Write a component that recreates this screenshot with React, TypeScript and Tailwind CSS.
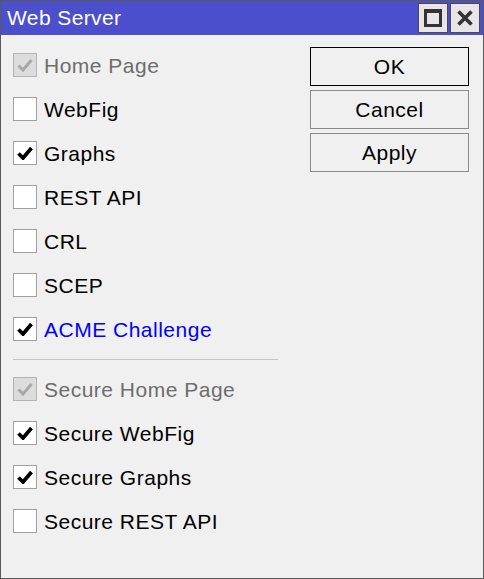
import React from 'react';

type Item = { label: string; checked: boolean; disabled?: boolean; link?: boolean };

const GROUP_A: Item[] = [
  { label: 'Home Page', checked: true, disabled: true },
  { label: 'WebFig', checked: false },
  { label: 'Graphs', checked: true },
  { label: 'REST API', checked: false },
  { label: 'CRL', checked: false },
  { label: 'SCEP', checked: false },
  { label: 'ACME Challenge', checked: true, link: true },
];

const GROUP_B: Item[] = [
  { label: 'Secure Home Page', checked: true, disabled: true },
  { label: 'Secure WebFig', checked: true },
  { label: 'Secure Graphs', checked: true },
  { label: 'Secure REST API', checked: false },
];

function CheckRow({ item }: { item: Item }) {
  return (
    <div className="flex h-[44px] items-center">
      <div
        className={`flex h-[24px] w-[24px] items-center justify-center border ${
          item.disabled ? 'border-[#b4b4b4] bg-[#dcdcdc]' : 'border-[#a0a0a0] bg-white'
        }`}
      >
        {item.checked && (
          <svg width="16" height="14" viewBox="0 0 16 14">
            <path
              d="M1.5 7.5 L6 12 L14.5 2"
              fill="none"
              stroke={item.disabled ? '#a8a8a8' : '#000'}
              strokeWidth={item.disabled ? 3 : 3.8}
            />
          </svg>
        )}
      </div>
      <span
        className={`ml-[7px] text-[21px] leading-none tracking-[0.5px] ${
          item.disabled ? 'text-[#6d6d6d]' : item.link ? 'text-[#0000ff]' : 'text-black'
        }`}
      >
        {item.label}
      </span>
    </div>
  );
}

function DlgButton({ label, primary }: { label: string; primary?: boolean }) {
  return (
    <button
      className={`h-[39px] w-[159px] border bg-[#f0f0f0] text-[21px] tracking-[0.5px] text-black ${
        primary ? 'border-black' : 'border-[#8a8a8a]'
      }`}
    >
      {label}
    </button>
  );
}

export default function App() {
  return (
    <div
      className="flex h-[579px] w-[484px] flex-col border border-[#5a5a5a] bg-[#f0f0f0]"
      style={{ fontFamily: '"Liberation Sans", Arial, sans-serif' }}
    >
      {/* title bar */}
      <div className="flex h-[34px] items-center justify-between bg-[#4b4fcb] pl-[6px] pr-[3px]">
        <span className="text-[21px] tracking-[0.4px] text-white">Web Server</span>
        <div className="flex gap-[2px]">
          <div className="flex h-[30px] w-[30px] items-center justify-center border border-[#4a4a4a] bg-[#e8e4e8]">
            <div className="h-[18px] w-[18px] border-[3px] border-[#333] border-t-[4px]" />
          </div>
          <div className="flex h-[30px] w-[30px] items-center justify-center border border-[#4a4a4a] bg-[#e8e4e8]">
            <svg width="18" height="18" viewBox="0 0 18 18">
              <path d="M2.5 2.5 L15.5 15.5 M15.5 2.5 L2.5 15.5" stroke="#333" strokeWidth="3.6" />
            </svg>
          </div>
        </div>
      </div>

      {/* body */}
      <div className="flex pl-[12px] pt-[8px]">
        <div className="w-[265px]">
          {GROUP_A.map((it) => (
            <CheckRow key={it.label} item={it} />
          ))}
          <div className="mb-[7px] mt-[8px] h-px w-[265px] bg-[#c4c4c4]" />
          {GROUP_B.map((it) => (
            <CheckRow key={it.label} item={it} />
          ))}
        </div>
        <div className="ml-[32px] flex flex-col gap-[4px] pt-[4px]">
          <DlgButton label="OK" primary />
          <DlgButton label="Cancel" />
          <DlgButton label="Apply" />
        </div>
      </div>
    </div>
  );
}
